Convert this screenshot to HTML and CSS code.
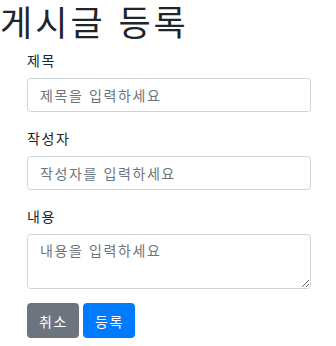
FILE: index.html
```html
<!DOCTYPE html>
<html lang="ko">
<head>
    <meta charset="UTF-8">
    <meta name="viewport" content="width=device-width, initial-scale=1.0">
    <title>게시글 등록</title>
    <link rel="stylesheet" href="styles.css">
</head>
<body>

<h1>게시글 등록</h1>

<form class="post-form">
    <div class="form-group">
        <label for="title">제목</label>
        <input type="text" id="title" class="form-control" placeholder="제목을 입력하세요">
    </div>
    <div class="form-group">
        <label for="writer">작성자</label>
        <input type="text" id="writer" class="form-control" placeholder="작성자를 입력하세요">
    </div>
    <div class="form-group last">
        <label for="content">내용</label>
        <textarea id="content" class="form-control" rows="2" placeholder="내용을 입력하세요"></textarea>
    </div>
    <div class="actions">
        <button type="button" class="btn btn-secondary">취소</button>
        <button type="submit" class="btn btn-primary">등록</button>
    </div>
</form>

</body>
</html>
```

FILE: styles.css
```css
body {
    font-family: "Noto Sans CJK KR", "Noto Sans", sans-serif;
    font-size: 14px;
    line-height: 1.5;
    letter-spacing: 1.6px;
    color: #212529;
    margin: 0;
}

h1 {
    font-size: 35px;
    font-weight: 400;
    line-height: 42px;
    letter-spacing: 3px;
    margin: 0 0 8px;
}

.post-form {
    width: 284px;
    margin-left: 27px;
}

.form-group {
    margin-bottom: 16px;
}

.form-group.last {
    margin-bottom: 14px;
}

label {
    display: block;
    margin-bottom: 7px;
}

.form-control {
    display: block;
    box-sizing: border-box;
    width: 100%;
    height: 34px;
    padding: 5px 12px;
    font-family: inherit;
    font-size: 14px;
    line-height: 21px;
    letter-spacing: inherit;
    color: #495057;
    background: #fff;
    border: 1px solid #ced4da;
    border-radius: 3.5px;
    margin: 0;
}

textarea.form-control {
    height: 55px;
    resize: vertical;
}

.form-control::placeholder {
    color: #6c757d;
}

.actions {
    display: flex;
    gap: 4px;
}

.btn {
    box-sizing: border-box;
    height: 35px;
    padding: 0 10px 0 11px;
    font-family: inherit;
    font-size: 14px;
    letter-spacing: inherit;
    color: #fff;
    border: 1px solid transparent;
    border-radius: 3.5px;
    margin: 0;
}

.btn-secondary {
    background: #6c757d;
    border-color: #6c757d;
}

.btn-primary {
    background: #007bff;
    border-color: #007bff;
}
```
